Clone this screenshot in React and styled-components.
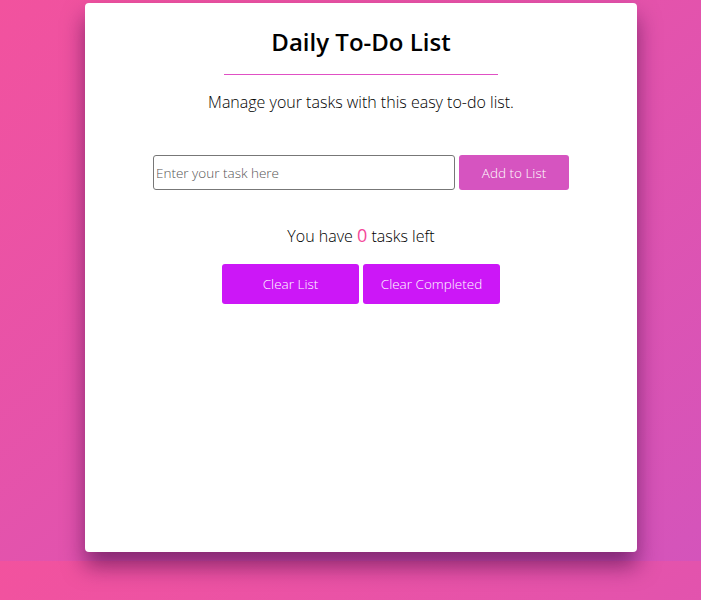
import styled, { createGlobalStyle } from 'styled-components';

/* ----------- Global ----------- */

const GlobalStyle = createGlobalStyle`
  html {
    min-height: 100%;
    background: linear-gradient(to bottom right, #f2529e, #d454bb);
    background-size: 100% 561px;
  }

  body {
    margin: 0;
    font-family: 'Open Sans', 'Liberation Sans', sans-serif;
    color: #000;
  }
`;

const Page = styled.div`
  padding: 3px 0 40px 85px;
`;

/* ----------- Card ----------- */

const Card = styled.main`
  width: 552px;
  height: 549px;
  box-sizing: border-box;
  background-color: #fff;
  border-radius: 4px;
  box-shadow: 0 14px 22px rgba(70, 10, 70, 0.6);
  display: flex;
  flex-direction: column;
  align-items: center;
`;

const Title = styled.h1`
  margin: 22px 0 0;
  font-size: 24px;
  font-weight: 600;
  line-height: 33px;
`;

const Divider = styled.hr`
  width: 274px;
  height: 1px;
  margin: 16px 0 0;
  border: none;
  background-color: #e050c4;
`;

const Subtitle = styled.p`
  margin: 16px 0 0;
  font-size: 16px;
  font-weight: 300;
  line-height: 22px;
`;

/* ----------- Form ----------- */

const Form = styled.form`
  display: flex;
  gap: 4px;
  margin-top: 42px;
`;

const TaskInput = styled.input`
  width: 302px;
  height: 35px;
  box-sizing: border-box;
  padding: 0 2px;
  border: 1px solid #777;
  border-radius: 3px;
  font-family: inherit;
  font-size: 13.5px;
  font-weight: 300;
  color: #000;
  outline: none;

  &::placeholder {
    color: #555;
  }
`;

const Btn = styled.button`
  width: ${({ $width }) => $width}px;
  height: ${({ $height }) => $height}px;
  border: none;
  border-radius: 3px;
  background-color: ${({ $bg }) => $bg};
  color: #fff;
  font-family: inherit;
  font-size: 13.5px;
  font-weight: 300;
  cursor: pointer;
`;

/* ----------- Counter ----------- */

const Counter = styled.p`
  margin: 34px 0 0;
  font-size: 16px;
  font-weight: 300;
  line-height: 22px;
`;

const Count = styled.span`
  color: #f4489a;
  font-size: 18px;
  font-weight: 400;
`;

const Actions = styled.div`
  display: flex;
  gap: 4px;
  margin-top: 17px;
`;

/* ----------- App ----------- */

export default function App() {
  return (
    <>
      <GlobalStyle />
      <Page>
        <Card>
          <Title>Daily To-Do List</Title>
          <Divider />
          <Subtitle>Manage your tasks with this easy to-do list.</Subtitle>
          <Form onSubmit={(e) => e.preventDefault()}>
            <TaskInput placeholder="Enter your task here" />
            <Btn type="submit" $width={110} $height={35} $bg="#d654c0">Add to List</Btn>
          </Form>
          <Counter>You have <Count>0</Count> tasks left</Counter>
          <Actions>
            <Btn type="button" $width={137} $height={40} $bg="#cc17f7">Clear List</Btn>
            <Btn type="button" $width={137} $height={40} $bg="#cc17f7">Clear Completed</Btn>
          </Actions>
        </Card>
      </Page>
    </>
  );
}
